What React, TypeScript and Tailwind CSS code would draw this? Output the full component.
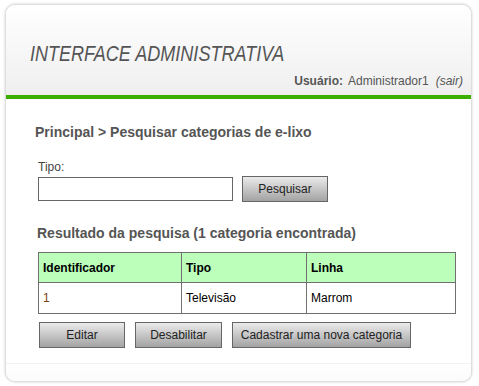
import React from "react"

const font = { fontFamily: '"Liberation Sans", Arial, Helvetica, sans-serif' }

// botão cinza com degradê
function BotaoCinza({ children, className = "" }: { children: React.ReactNode; className?: string }) {
  return (
    <button
      className={`h-[26px] border border-[#666] bg-gradient-to-b from-[#ebebeb] to-[#a3a3a3] text-[12px] text-[#222] leading-none ${className}`}
    >
      {children}
    </button>
  )
}

export default function App() {
  const linhas = [{ id: "1", tipo: "Televisão", linha: "Marrom" }]

  return (
    <div className="w-[479px] h-[386px] bg-white pt-[4px] pl-[5px]" style={font}>
      <div className="w-[467px] h-[378px] rounded-[10px] border border-[#dedede] shadow-[0_0_3px_rgba(0,0,0,0.18)] overflow-hidden flex flex-col bg-white">
        {/* Cabeçalho */}
        <div className="h-[90px] flex flex-col bg-gradient-to-b from-white to-[#efefef]">
          <h1 className="mt-[38px] ml-[24px] w-max origin-left scale-x-[0.82] text-[22px] leading-[22px] italic font-normal text-[#555]">
            INTERFACE ADMINISTRATIVA
          </h1>
          <div className="mt-[10px] pr-[8px] text-right text-[12px] leading-[12px] text-[#555]">
            <span className="font-bold">Usuário:</span>
            <span className="ml-[5px]">Administrador1</span>
            <span className="ml-[7px] italic">(sair)</span>
          </div>
        </div>
        <div className="h-[4px] bg-[#3cae00]" />

        {/* Conteúdo */}
        <div className="flex-1 flex flex-col pl-[29px]">
          <h2 className="mt-[25px] text-[14px] leading-[16px] font-bold text-[#555]">
            Principal &gt; Pesquisar categorias de e-lixo
          </h2>

          <label className="mt-[20px] ml-[3px] text-[12px] leading-[14px] text-[#444]">Tipo:</label>
          <div className="mt-[2px] ml-[3px] flex items-center gap-[9px]">
            <input className="w-[195px] h-[24px] border border-[#666] bg-white outline-none" />
            <BotaoCinza className="w-[86px] h-[25px]">Pesquisar</BotaoCinza>
          </div>

          <h3 className="mt-[23px] ml-[2px] text-[14px] leading-[16px] font-bold text-[#555]">
            Resultado da pesquisa (1 categoria encontrada)
          </h3>

          <table className="mt-[11px] ml-[3px] w-[418px] border-collapse text-[12px] text-black">
            <thead>
              <tr className="h-[30px] bg-[#bbffbb]">
                <th className="w-[143px] border border-[#707070] px-[4px] text-left font-bold">Identificador</th>
                <th className="w-[125px] border border-[#707070] px-[4px] text-left font-bold">Tipo</th>
                <th className="border border-[#707070] px-[4px] text-left font-bold">Linha</th>
              </tr>
            </thead>
            <tbody>
              {linhas.map((l) => (
                <tr key={l.id} className="h-[31px]">
                  <td className="border border-[#707070] px-[4px] text-[#7a4210]">{l.id}</td>
                  <td className="border border-[#707070] px-[4px]">{l.tipo}</td>
                  <td className="border border-[#707070] px-[4px]">{l.linha}</td>
                </tr>
              ))}
            </tbody>
          </table>

          <div className="mt-[8px] ml-[4px] flex gap-[10px]">
            <BotaoCinza className="w-[86px]">Editar</BotaoCinza>
            <BotaoCinza className="w-[87px]">Desabilitar</BotaoCinza>
            <BotaoCinza className="w-[179px]">Cadastrar uma nova categoria</BotaoCinza>
          </div>
        </div>

        {/* Rodapé */}
        <div className="h-[18px] border-t border-[#f2f2f2] bg-gradient-to-b from-white to-[#fbfbfb]" />
      </div>
    </div>
  )
}
